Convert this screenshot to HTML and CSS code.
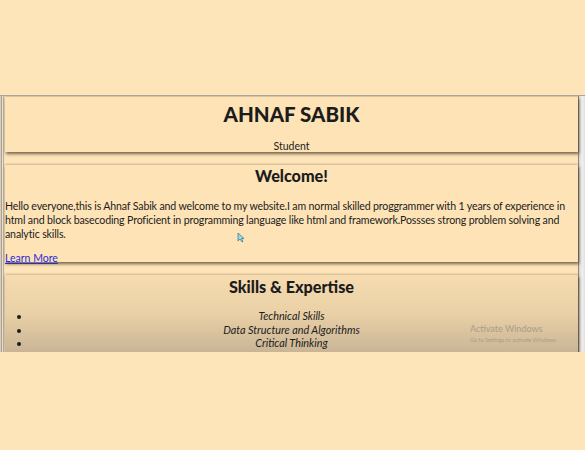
FILE: index.html
```html
<!DOCTYPE html>
<html>
<head>
<meta charset="utf-8">
<link rel="stylesheet" href="styles.css">
</head>
<body>
<div class="top"></div>
<div class="frame">
  <div class="edge-left"></div>
  <main class="content">
    <header class="card card-head">
      <h1>AHNAF SABIK</h1>
      <p class="role">Student</p>
    </header>
    <section class="card card-welcome">
      <h2>Welcome!</h2>
      <p class="intro">Hello everyone,this is Ahnaf Sabik and welcome to my website.I am normal skilled proggrammer with 1 years of experience in html and block basecoding Proficient in programming language like html and framework.Possses strong problem solving and analytic skills.</p>
      <a href="#" class="more">Learn More</a>
      <svg class="cursor" width="8" height="11" viewBox="0 0 8 11"><path d="M1 1 L1 9 L3 7 L5 10 L6 9.5 L4.5 6.5 L7 6.5 Z" fill="#9fd8e6" stroke="#3d7f96" stroke-width="0.8"/></svg>
    </section>
    <section class="card card-skills">
      <h2>Skills &amp; Expertise</h2>
      <ul class="skills">
        <li>Technical Skills</li>
        <li>Data Structure and Algorithms</li>
        <li>Critical Thinking</li>
      </ul>
      <div class="watermark">
        <div class="wm-title">Activate Windows</div>
        <div class="wm-sub">Go to Settings to activate Windows.</div>
      </div>
    </section>
  </main>
  <div class="edge-right"></div>
</div>
</body>
</html>
```
FILE: styles.css
```css
html, body {
  margin: 0;
  padding: 0;
}
body {
  background: #fde4b9;
  font-family: Lato, "Open Sans", sans-serif;
  color: #1c1c1c;
  width: 585px;
  height: 450px;
  overflow: hidden;
}
.top {
  height: 95px;
}
.frame {
  display: flex;
  height: 256px;
  border-top: 1px solid #aaa49a;
  overflow: hidden;
}
.edge-left {
  width: 5px;
  background: linear-gradient(90deg, #d9cdb9 0, #d9cdb9 1px, #a8a196 1px, #a8a196 2px, #efe0c6 2px, #efe0c6 3px, #b9b1a4 3px, #b9b1a4 4px, #f2dfbd 4px);
}
.edge-right {
  width: 7px;
  background: linear-gradient(90deg, #8d8780 0, #8d8780 1px, #d8d3d0 1px, #f3f0f0 4px, #e4e0dc 7px);
}
.content {
  flex: 1;
  display: flex;
  flex-direction: column;
  gap: 13px;
  padding-top: 1px;
}
.card {
  background: #fde3b6;
  box-shadow: 1px 2px 3px rgba(60, 45, 30, 0.7), 0 -1px 2px rgba(120, 100, 80, 0.3);
  position: relative;
}
.card-head {
  height: 55px;
  text-align: center;
}
h1 {
  margin: 0;
  padding-top: 4px;
  font-size: 20.5px;
  line-height: 26px;
  font-weight: 900;
}
.role {
  margin: 13px 0 0;
  font-size: 10.5px;
  line-height: 12px;
}
.card-welcome {
  height: 97px;
}
h2 {
  margin: 0;
  text-align: center;
  font-size: 16.2px;
  line-height: 22px;
  padding-top: 0;
  font-weight: 900;
}
.intro {
  margin: 12px 0 0;
  font-size: 10.6px;
  letter-spacing: -0.15px;
  line-height: 14px;
}
.more {
  display: inline-block;
  margin-top: 10px;
  font-size: 10.5px;
  line-height: 14px;
  color: #2a2ad8;
}
.cursor {
  position: absolute;
  left: 232px;
  top: 67px;
}
.card-skills {
  height: 80px;
  background: linear-gradient(180deg, #f6dcaf 0%, #e9d0a6 50%, #c9b596 100%);
}
.skills {
  margin: 11px 0 0;
  padding: 0 0 0 26px;
  font-style: italic;
  font-size: 10.8px;
  line-height: 13.5px;
  text-align: center;
}
.skills li {
  padding-right: 26px;
}
.skills li::marker {
  font-size: 11px;
}
.card-skills h2 {
  padding-top: 1px;
}
.watermark {
  position: absolute;
  left: 465px;
  top: 48px;
  color: #aa9d88;
}
.wm-title {
  font-size: 9px;
  line-height: 11px;
}
.wm-sub {
  font-size: 5.5px;
  line-height: 8px;
  margin-top: 2px;
}
```
